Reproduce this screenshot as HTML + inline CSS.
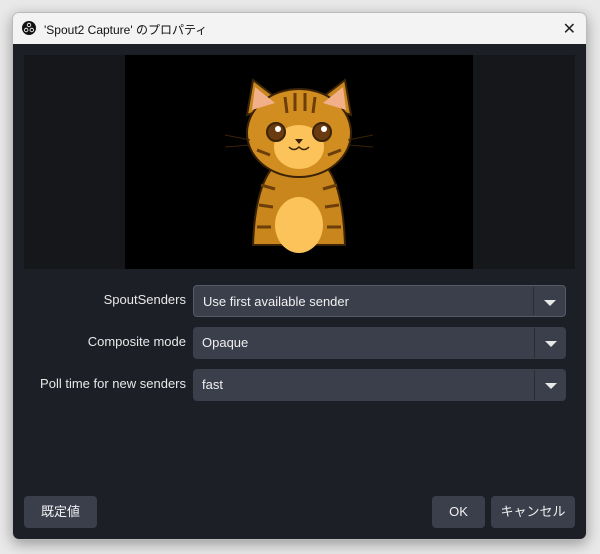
<!DOCTYPE html>
<html><head><meta charset="utf-8"><style>
*{margin:0;padding:0;box-sizing:border-box}
body{width:600px;height:554px;background:#e9e9e9;position:relative;overflow:hidden;font-family:"Liberation Sans","Noto Sans CJK JP",sans-serif}
.win{position:absolute;left:12px;top:12px;width:575px;height:528px;border-radius:7px;overflow:hidden;box-shadow:0 4px 14px rgba(0,0,0,.35);border:1px solid #bbb}
.tb{height:31px;background:#f3f3f3;position:relative;font-size:12px;color:#111}
.tb .t{position:absolute;left:31px;top:8px}
.tb .x{position:absolute;right:10px;top:6px;font-size:16px;font-weight:300;color:#222}
.bd{position:absolute;top:31px;left:0;right:0;bottom:0;background:#1d1f27}
.pv{position:absolute;left:11px;top:11px;width:551px;height:214px;background:#16171b}
.img{position:absolute;left:101px;top:0;width:348px;height:214px;background:#000}
.lab{position:absolute;right:400px;color:#e8e8e8;font-size:13px;text-align:right;white-space:nowrap}
.cb{position:absolute;left:180px;width:373px;height:32px;background:#3b3e4b;border-radius:4px;color:#f0f0f0;font-size:13px;padding:8px 9px}
.cb:after{content:"";position:absolute;right:31px;top:1px;bottom:1px;width:1px;background:#2a2c35}
.cb i{position:absolute;right:9px;top:14px;border-left:6px solid transparent;border-right:6px solid transparent;border-top:6px solid #e8e8e8}
.btn{position:absolute;height:32px;background:#3b3e4b;border-radius:4px;color:#f0f0f0;font-size:13px;text-align:center;line-height:32px}
</style></head><body>
<div class="win">
<div class="tb"><svg style="position:absolute;left:9px;top:8px" width="14" height="14" viewBox="0 0 14 14"><circle cx="7" cy="7" r="7" fill="#111"/><circle cx="7" cy="4" r="2.2" fill="#f3f3f3"/><circle cx="4.2" cy="9" r="2.2" fill="#f3f3f3"/><circle cx="9.8" cy="9" r="2.2" fill="#f3f3f3"/><circle cx="7" cy="4" r="1.3" fill="#111"/><circle cx="4.2" cy="9" r="1.3" fill="#111"/><circle cx="9.8" cy="9" r="1.3" fill="#111"/></svg><span class="t">'Spout2 Capture' のプロパティ</span><span class="x">✕</span></div>
<div class="bd">
<div class="pv"><div class="img">
<svg width="348" height="214" viewBox="0 0 348 214">
<g stroke="#3a2306" stroke-width="2">
<path d="M128 190 Q130 130 150 110 L200 110 Q218 130 220 190 Z" fill="#c9861c"/>
<ellipse cx="174" cy="170" rx="24" ry="28" fill="#fbc35a" stroke="none"/>
<path d="M122 60 L128 25 L158 48 Z" fill="#c9861c"/>
<path d="M226 60 L220 25 L190 48 Z" fill="#c9861c"/>
<ellipse cx="174" cy="78" rx="52" ry="44" fill="#d18d1f"/>
</g>
<path d="M127 55 L130 32 L150 48 Z" fill="#f2b08a"/>
<path d="M221 55 L218 32 L198 48 Z" fill="#f2b08a"/>
<ellipse cx="174" cy="92" rx="25" ry="22" fill="#fbc35a"/>
<circle cx="151" cy="77" r="9" fill="#6a3b10" stroke="#3a2306" stroke-width="2"/><circle cx="197" cy="77" r="9" fill="#6a3b10" stroke="#3a2306" stroke-width="2"/>
<circle cx="153" cy="74" r="3" fill="#fff"/><circle cx="199" cy="74" r="3" fill="#fff"/>
<path d="M170 84 L178 84 L174 89 Z" fill="#3a2306"/>
<path d="M164 92 Q169 97 174 92 Q179 97 184 92" fill="none" stroke="#3a2306" stroke-width="1.5"/>
<g stroke="#6b3e0a" stroke-width="3"><path d="M160 42 L162 58 M170 38 L170 56 M180 38 L180 56 M190 42 L188 58 M132 95 L145 100 M216 95 L203 100 M136 130 L150 134 M212 130 L198 134 M134 150 L148 152 M214 150 L200 152 M132 172 L146 172 M216 172 L202 172"/></g>
<g stroke="#3a2306" stroke-width="1"><path d="M125 85 L100 80 M125 90 L100 92 M223 85 L248 80 M223 90 L248 92"/></g>
</svg></div></div>
<div class="lab" style="top:248px">SpoutSenders</div>
<div class="cb" style="top:241px;border:1px solid #555a66">Use first available sender<i></i></div>
<div class="lab" style="top:290px">Composite mode</div>
<div class="cb" style="top:283px">Opaque<i></i></div>
<div class="lab" style="top:332px">Poll time for new senders</div>
<div class="cb" style="top:325px">fast<i></i></div>
<div class="btn" style="left:11px;width:73px;top:452px">既定値</div>
<div class="btn" style="left:419px;width:53px;top:452px">OK</div>
<div class="btn" style="left:478px;width:84px;top:452px">キャンセル</div>
</div></div>
</body></html>
